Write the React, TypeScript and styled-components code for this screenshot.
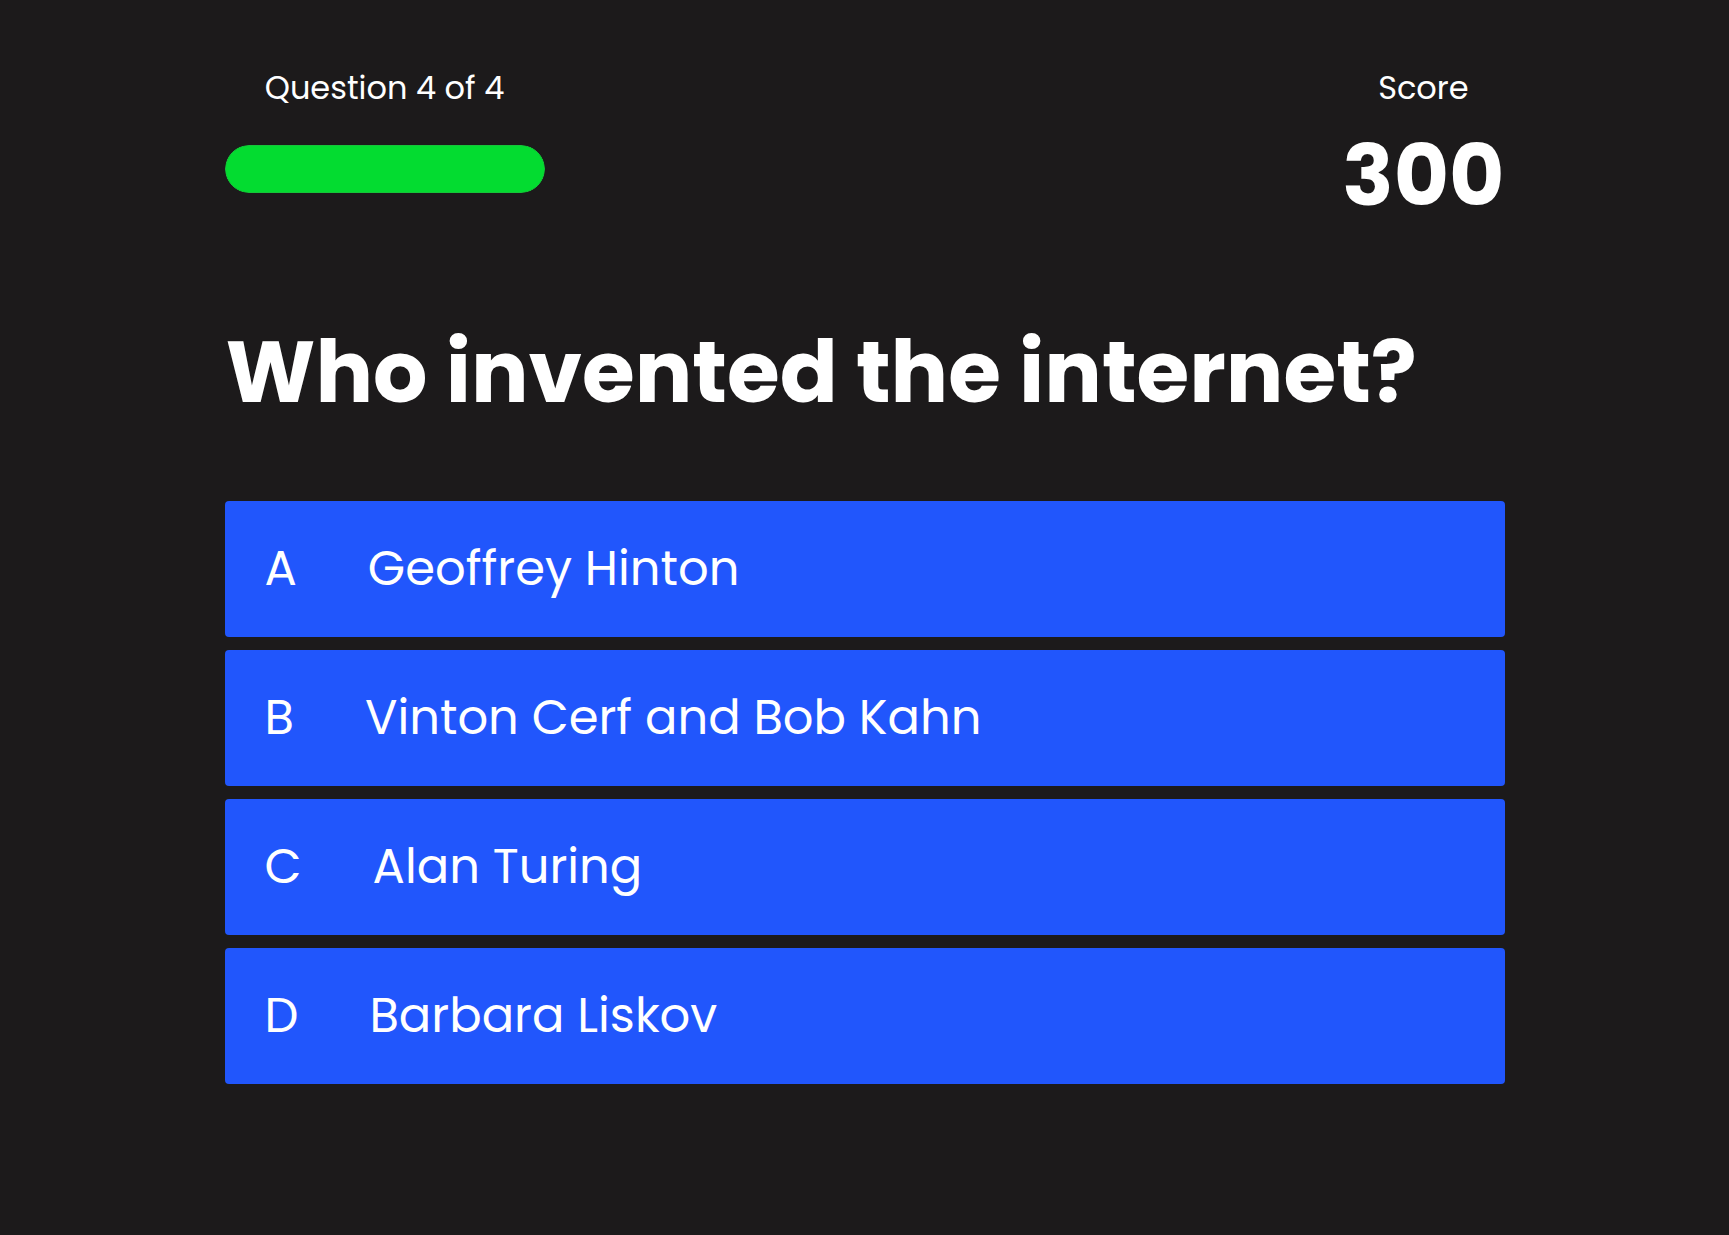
import React from "react";
import styled, { createGlobalStyle } from "styled-components";

const GlobalStyle = createGlobalStyle`
  html, body {
    margin: 0;
    padding: 0;
    background: #1c1a1b;
  }
  body {
    font-family: "Poppins", Inter, "Open Sans", sans-serif;
    color: #ffffff;
  }
`;

const Page = styled.main`
  min-height: 1235px;
  box-sizing: border-box;
  padding-top: 69px;
`;

const Container = styled.div`
  width: 1280px;
  margin: 0 auto;
`;

const Header = styled.header`
  display: flex;
  justify-content: space-between;
  align-items: flex-start;
`;

const ProgressColumn = styled.div`
  width: 320px;
  display: flex;
  flex-direction: column;
  align-items: center;
`;

const Label = styled.div`
  font-size: 32px;
  line-height: 38.4px;
  font-weight: 400;
  text-align: center;
`;

const Track = styled.div`
  margin-top: 38px;
  width: 320px;
  height: 48px;
  box-sizing: border-box;
  border-radius: 24px;
  background: #1c1a1b;
  overflow: hidden;
`;

const Fill = styled.div`
  height: 100%;
  box-sizing: border-box;
  border-radius: 24px;
  background: #03dc30;
  border: 1px solid #16c43a;
`;

const ScoreColumn = styled.div`
  display: flex;
  flex-direction: column;
  align-items: center;
`;

const ScoreValue = styled.div`
  margin-top: 26px;
  font-size: 85px;
  line-height: 85px;
  font-weight: 700;
`;

const Question = styled.h1`
  margin: 104px 0 0 0;
  font-size: 85.5px;
  line-height: 100px;
  font-weight: 700;
  padding-left: 1px;
`;

const Answers = styled.ol`
  list-style: none;
  margin: 79px 0 0 0;
  padding: 0;
  display: flex;
  flex-direction: column;
  gap: 13px;
`;

const AnswerCard = styled.li`
  height: 136px;
  box-sizing: border-box;
  padding: 0 40px;
  display: flex;
  align-items: center;
  background: #2156fc;
  border-radius: 4px;
  font-size: 48px;
  font-weight: 400;
`;

const AnswerLetter = styled.span`
  margin-right: 71px;
  flex-shrink: 0;
`;

const AnswerText = styled.span``;

const answers = [
  { letter: "A", text: "Geoffrey Hinton" },
  { letter: "B", text: "Vinton Cerf and Bob Kahn" },
  { letter: "C", text: "Alan Turing" },
  { letter: "D", text: "Barbara Liskov" },
];

export default function App() {
  const current = 4;
  const total = 4;
  return (
    <>
      <GlobalStyle />
      <Page>
        <Container>
          <Header>
            <ProgressColumn>
              <Label>
                Question {current} of {total}
              </Label>
              <Track>
                <Fill style={{ width: `${(current / total) * 100}%` }} />
              </Track>
            </ProgressColumn>
            <ScoreColumn>
              <Label>Score</Label>
              <ScoreValue>300</ScoreValue>
            </ScoreColumn>
          </Header>
          <Question>Who invented the internet?</Question>
          <Answers>
            {answers.map((a) => (
              <AnswerCard key={a.letter}>
                <AnswerLetter>{a.letter}</AnswerLetter>
                <AnswerText>{a.text}</AnswerText>
              </AnswerCard>
            ))}
          </Answers>
        </Container>
      </Page>
    </>
  );
}
